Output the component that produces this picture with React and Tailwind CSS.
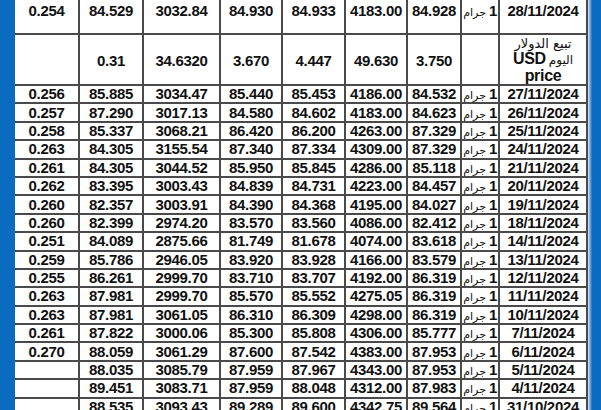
import React from "react";

const top = ["0.254", "84.529", "3032.84", "84.930", "84.933", "4183.00", "84.928", "28/11/2024"];
const usd = ["", "0.31", "34.6320", "3.670", "4.447", "49.630", "3.750"];

const rows = [
  ["0.256", "85.885", "3034.47", "85.440", "85.453", "4186.00", "84.532", "27/11/2024"],
  ["0.257", "87.290", "3017.13", "84.580", "84.602", "4183.00", "84.623", "26/11/2024"],
  ["0.258", "85.337", "3068.21", "86.420", "86.200", "4263.00", "87.329", "25/11/2024"],
  ["0.263", "84.305", "3155.54", "87.340", "87.334", "4309.00", "87.329", "24/11/2024"],
  ["0.261", "84.305", "3044.52", "85.950", "85.845", "4286.00", "85.118", "21/11/2024"],
  ["0.262", "83.395", "3003.43", "84.839", "84.731", "4223.00", "84.457", "20/11/2024"],
  ["0.260", "82.357", "3003.91", "84.390", "84.368", "4195.00", "84.027", "19/11/2024"],
  ["0.260", "82.399", "2974.20", "83.570", "83.560", "4086.00", "82.412", "18/11/2024"],
  ["0.251", "84.089", "2875.66", "81.749", "81.678", "4074.00", "83.618", "14/11/2024"],
  ["0.259", "85.786", "2946.05", "83.920", "83.928", "4166.00", "83.579", "13/11/2024"],
  ["0.255", "86.261", "2999.70", "83.710", "83.707", "4192.00", "86.319", "12/11/2024"],
  ["0.263", "87.981", "2999.70", "85.570", "85.552", "4275.05", "86.319", "11/11/2024"],
  ["0.263", "87.981", "3061.05", "86.310", "86.309", "4298.00", "86.319", "10/11/2024"],
  ["0.261", "87.822", "3000.06", "85.300", "85.808", "4306.00", "85.777", "7/11/2024"],
  ["0.270", "88.059", "3061.29", "87.600", "87.542", "4383.00", "87.953", "6/11/2024"],
  ["", "88.035", "3085.79", "87.959", "87.967", "4343.00", "87.953", "5/11/2024"],
  ["", "89.451", "3083.71", "87.959", "88.048", "4312.00", "87.983", "4/11/2024"],
  ["", "88.535", "3093.43", "89.289", "89.600", "4342.75", "89.564", "31/10/2024"],
];

const cell = "border-2 border-[#4a4a4a] text-center p-0 leading-[14px]";

const Gram = () => (
  <span dir="rtl" className="inline-flex items-baseline gap-[3px] h-[14px] leading-[14px] whitespace-nowrap">
    <span className="text-[15px]">1</span>
    <span className="text-[11px] font-normal font-['DejaVu_Sans',sans-serif]">جرام</span>
  </span>
);

const Row = ({ r }) => (
  <tr className="h-[18.4px]">
    {r.slice(0, 7).map((v, i) => (
      <td key={i} className={cell + (i === 0 ? " border-l-0" : "")}>
        {v}
      </td>
    ))}
    <td className={cell + " text-right pr-[1px]"}>
      <Gram />
    </td>
    <td className={cell}>{r[7]}</td>
  </tr>
);

export default function App() {
  return (
    <div className="flex w-[601px] h-[410px] overflow-hidden bg-white">
      <div className="w-[15px] shrink-0 bg-[#0a6cc0]" />
      <table className="w-[572px] shrink-0 table-fixed border-collapse self-start text-[15px] font-bold tracking-[-0.3px] text-[#111] font-['Liberation_Sans',Arial,sans-serif]">
        <colgroup>
          <col className="w-[64px]" />
          <col className="w-[64px]" />
          <col className="w-[77px]" />
          <col className="w-[62px]" />
          <col className="w-[63px]" />
          <col className="w-[62px]" />
          <col className="w-[54px]" />
          <col className="w-[38px]" />
          <col className="w-[88px]" />
        </colgroup>
        <tbody>
          <tr className="h-[34px]">
            {top.slice(0, 7).map((v, i) => (
              <td key={i} className={cell + " border-t-0 align-top pt-[4px]" + (i === 0 ? " border-l-0" : "")}>
                {v}
              </td>
            ))}
            <td className={cell + " border-t-0 align-top pt-[4px] text-right pr-[1px]"}>
              <Gram />
            </td>
            <td className={cell + " border-t-0 align-top pt-[4px]"}>{top[7]}</td>
          </tr>
          <tr className="h-[51px]">
            {usd.map((v, i) => (
              <td key={i} className={cell + " pt-[3px]" + (i === 0 ? " border-l-0" : "")}>
                {v}
              </td>
            ))}
            <td className={cell} />
            <td className={cell + " leading-[16px]"} dir="rtl">
              <div className="h-[15px] text-[13px] font-normal font-['DejaVu_Sans',sans-serif]">تبيع الدولار</div>
              <div className="h-[17px] flex items-baseline justify-center gap-[3px]">
                <span className="text-[12px] font-normal font-['DejaVu_Sans',sans-serif]">اليوم</span>
                <span className="text-[16px]">USD</span>
              </div>
              <div className="h-[15px] text-[16px]">price</div>
            </td>
          </tr>
          {rows.map((r, i) => (
            <Row key={i} r={r} />
          ))}
        </tbody>
      </table>
      <div className="w-[4px] shrink-0 bg-gradient-to-r from-[#dbe9f6] to-[#0a6cc0]" />
      <div className="flex-1 bg-[#0a6cc0]" />
    </div>
  );
}
